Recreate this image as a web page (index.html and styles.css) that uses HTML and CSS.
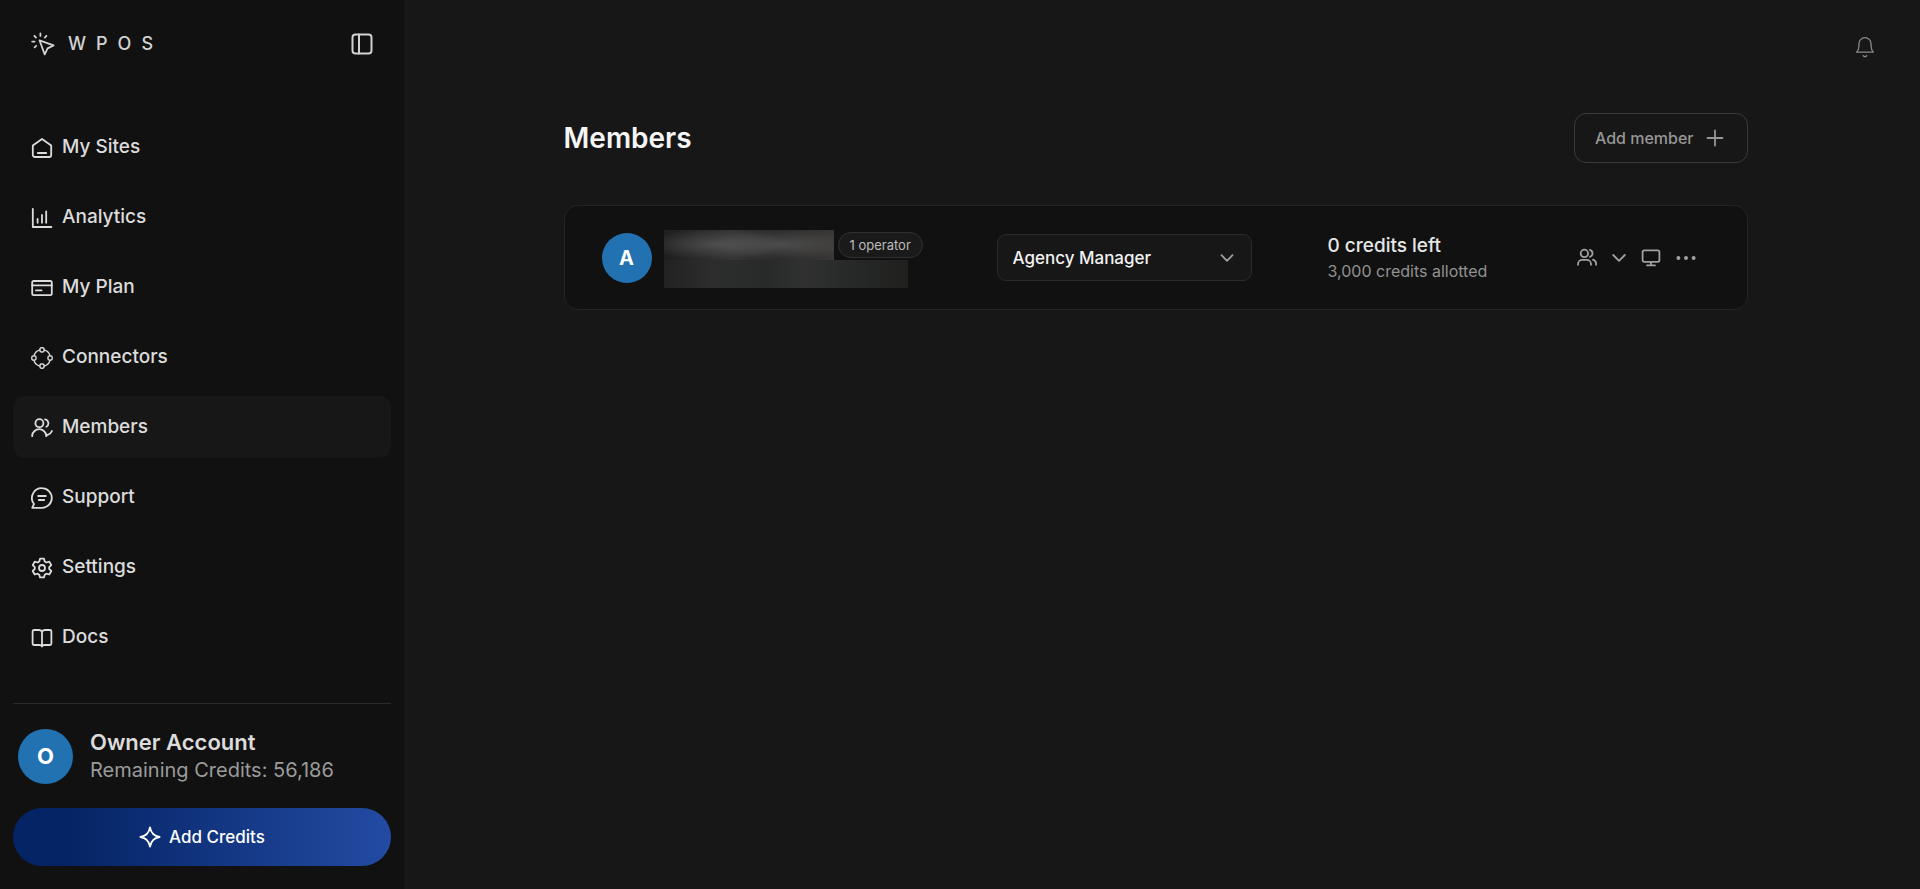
FILE: index.html
```html
<!DOCTYPE html>
<html lang="en">
<head>
<meta charset="utf-8">
<meta name="viewport" content="width=device-width, initial-scale=1">
<title>Members</title>
<link rel="stylesheet" href="styles.css">
</head>
<body>
<div class="app">
  <aside class="sidebar">
    <div class="brand-row">
      <a class="brand" href="#">
        <svg class="icon icon-logo" viewBox="0 0 24 24"><path d="M8.500 8.300 22.600 13.400 16.600 16.400 13.700 22.400Z"/><path d="M9.400 1.400v2.500M3.400 3.800 5 5.600M15.400 3.800 13.800 5.600M1.200 9.600h2.400M3.600 15.400l1.600-1.500"/></svg>
        <span class="brand-name">WPOS</span>
      </a>
      <button class="icon-button" type="button" aria-label="Toggle sidebar">
        <svg class="icon icon-panel" viewBox="0 0 22 22"><rect x="1.500" y="1.500" width="19" height="19" rx="3"/><path d="M8 1.500v19"/></svg>
      </button>
    </div>
    <nav class="nav">
      <a class="nav-item" href="#"><svg class="icon" viewBox="0 0 22 22"><path d="M1.800 8.600 11 1.900l9.200 6.700V18a2 2 0 0 1-2 2H3.800a2 2 0 0 1-2-2Z"/><path d="M6.800 16h8.400"/></svg><span>My Sites</span></a>
      <a class="nav-item" href="#"><svg class="icon" viewBox="0 0 22 22"><path d="M1.800 2v18h18.600M6.600 15.800v-4M11 15.800V8M15.200 15.800V4.500"/></svg><span>Analytics</span></a>
      <a class="nav-item" href="#"><svg class="icon" viewBox="0 0 22 22"><rect x="1.200" y="4" width="19.600" height="14.200" rx="1.600"/><path d="M1.200 8.400h19.600M5 13.400h5.600"/></svg><span>My Plan</span></a>
      <a class="nav-item" href="#"><svg class="icon icon-thin" viewBox="0 0 22 22"><rect x="8.900" y=".8" width="4.200" height="4.200" rx="1.400"/><rect x="8.900" y="17" width="4.200" height="4.200" rx="1.400"/><rect x=".8" y="8.900" width="4.200" height="4.200" rx="1.400"/><rect x="17" y="8.900" width="4.200" height="4.200" rx="1.400"/><path d="M13.100 2.900c3 .8 5.200 3 6 6M19.100 13.100c-.8 3-3 5.200-6 6M8.900 19.100c-3-.8-5.200-3-6-6M2.900 8.900c.8-3 3-5.200 6-6"/></svg><span>Connectors</span></a>
      <a class="nav-item active" href="#" aria-current="page"><svg class="icon" viewBox="0 0 22 22"><circle cx="8.400" cy="6.200" r="4"/><path d="M1.200 19.200v-.8a7 7 0 0 1 7-6.200 7 7 0 0 1 7 6.200v.8M14 2.400a4 4 0 0 1 1.400 7.400M16.200 18.200c2.300-.8 4-2.200 4.800-4.200"/></svg><span>Members</span></a>
      <a class="nav-item" href="#"><svg class="icon" viewBox="0 0 22 22"><path d="M11 1.200a9.800 9.800 0 1 1 0 19.600H1.200l1.800-3.800A9.800 9.800 0 0 1 11 1.200Z"/><path d="M7.200 9h7.600M7.800 13h5.400"/></svg><span>Support</span></a>
      <a class="nav-item" href="#"><svg class="icon" viewBox="0 0 22 22"><path d="M9 1.700h4l.7 2.800 1.700 1 2.900-.8 2 3.400-2.100 2.100v1.700l2.100 2.100-2 3.500-2.900-.8-1.700 1-.7 2.700H9l-.7-2.700-1.700-1-2.900.8-2-3.500 2.100-2.100v-1.700L1.700 8.100l2-3.400 2.900.8 1.700-1Z"/><circle cx="11" cy="11" r="3"/></svg><span>Settings</span></a>
      <a class="nav-item" href="#"><svg class="icon" viewBox="0 0 22 22"><path d="M11 4.600C10.200 3.500 9.400 3 8 3H3a1.400 1.400 0 0 0-1.400 1.400v12.200A1.400 1.400 0 0 0 3 18h5.600c1.200 0 2 .5 2.400 1.400.4-.9 1.200-1.400 2.400-1.400H19a1.400 1.400 0 0 0 1.400-1.400V4.400A1.400 1.400 0 0 0 19 3h-5c-1.400 0-2.200.5-3 1.600Zm0 0v14.800"/></svg><span>Docs</span></a>
    </nav>
    <div class="account">
      <div class="owner">
        <span class="avatar avatar-owner">O</span>
        <div class="owner-text">
          <div class="owner-name">Owner Account</div>
          <div class="owner-credits">Remaining Credits: 56,186</div>
        </div>
      </div>
      <button class="add-credits" type="button">
        <svg class="icon" viewBox="0 0 22 22"><path d="M11 1.400c1 6 3.600 8.600 9.600 9.600-6 1-8.600 3.600-9.600 9.600-1-6-3.600-8.600-9.600-9.600 6-1 8.600-3.600 9.600-9.600Z"/></svg>
        <span>Add Credits</span>
      </button>
    </div>
  </aside>

  <main class="main">
    <div class="topbar">
      <button class="icon-button" type="button" aria-label="Notifications">
        <svg class="icon icon-bell" viewBox="0 0 22 22"><path d="M2.600 16.200h16.800c-1.500-1.300-2-2.600-2.200-5L17 7.600a6 6 0 0 0-12 0l-.2 3.600c-.2 2.400-.7 3.700-2.200 5Z"/><path d="M9.200 19.800c1 1 2.600 1 3.600 0"/></svg>
      </button>
    </div>
    <div class="content">
      <header class="page-head">
        <h1>Members</h1>
        <button class="add-member" type="button"><span>Add member</span><svg class="icon icon-plus" viewBox="0 0 18 18"><path d="M9 1.500v15M1.500 9h15"/></svg></button>
      </header>
      <section class="member">
        <div class="person">
          <span class="avatar">A</span>
          <div class="identity">
            <div class="identity-top">
              <span class="redacted redacted-name"></span>
              <span class="badge">1 operator</span>
            </div>
            <span class="redacted redacted-email"></span>
          </div>
        </div>
        <div class="role">
          <select class="role-select" aria-label="Role"><option>Agency Manager</option></select>
          <svg class="icon icon-chevron role-chevron" viewBox="0 0 14 14"><path d="m1.500 4.200 5.500 5.600 5.500-5.600"/></svg>
        </div>
        <div class="credits">
          <div class="credits-left">0 credits left</div>
          <div class="credits-allotted">3,000 credits allotted</div>
        </div>
        <div class="actions">
          <button class="icon-button" type="button" aria-label="Operators"><svg class="icon icon-action" viewBox="0 0 20 20"><circle cx="7.400" cy="5.400" r="3.700"/><path d="M1 16.800V16a4.300 4.300 0 0 1 4.300-4.200h4.400A4.300 4.300 0 0 1 14 16v.8M13 1.900a3.700 3.700 0 0 1 0 7M16 11.600c2 .7 3.100 2.200 3.100 4.200v1"/></svg></button>
          <button class="icon-button" type="button" aria-label="Expand"><svg class="icon icon-chevron" viewBox="0 0 14 14"><path d="m1.200 4 5.800 5.800L12.800 4"/></svg></button>
          <button class="icon-button" type="button" aria-label="Sites"><svg class="icon icon-action" viewBox="0 0 20 20"><rect x="1.600" y="2.400" width="16.800" height="11.400" rx="1.600"/><path d="M10 13.800v3.400M6 17.400h8"/></svg></button>
          <button class="icon-button" type="button" aria-label="More"><svg class="icon icon-action icon-dots" viewBox="0 0 20 20"><circle cx="2.400" cy="10" r="2"/><circle cx="10" cy="10" r="2"/><circle cx="17.600" cy="10" r="2"/></svg></button>
        </div>
      </section>
    </div>
  </main>
</div>
</body>
</html>
```
FILE: styles.css
```css
*, *::before, *::after { box-sizing: border-box; }

body {
  margin: 0;
  background: #171717;
  color: #dcdcdc;
  font-family: Inter, "Liberation Sans", sans-serif;
}

button, select { font: inherit; color: inherit; }
button { cursor: pointer; }
a { color: inherit; text-decoration: none; }

.app { display: flex; min-height: 100vh; }

.icon {
  display: block;
  flex: none;
  width: 22px;
  height: 22px;
  fill: none;
  stroke: currentColor;
  stroke-width: 1.8;
  stroke-linecap: round;
  stroke-linejoin: round;
}
.icon-thin { stroke-width: 1.4; }
.icon-logo { width: 24px; height: 24px; }
.icon-panel { stroke-width: 2; }
.icon-bell { stroke-width: 1.3; }
.icon-plus { width: 18px; height: 18px; }
.icon-action { width: 20px; height: 20px; }
.icon-chevron { width: 14px; height: 14px; }
.icon-dots { fill: currentColor; stroke: none; }

.icon-button {
  padding: 0;
  border: 0;
  background: none;
}

.sidebar {
  display: flex;
  flex: none;
  flex-direction: column;
  width: 405px;
  padding: 32px 13px 23px;
  border-right: 1px solid #151515;
  background: #111;
}
.brand-row {
  display: flex;
  align-items: center;
  justify-content: space-between;
  height: 24px;
  padding: 0 18px;
  color: #d2d2d2;
}
.brand { display: flex; align-items: center; gap: 13px; }
.brand-name {
  font-size: 18px;
  line-height: 22px;
  font-weight: 500;
  letter-spacing: 10px;
}

.nav {
  display: flex;
  flex-direction: column;
  gap: 8px;
  margin-top: 60px;
}
.nav-item {
  display: flex;
  align-items: center;
  gap: 9px;
  height: 62px;
  padding: 0 18px 2px;
  border-radius: 12px;
  font-size: 19px;
  font-weight: 500;
}
.nav-item .icon { margin-top: 4px; }
.nav-item.active { background: #171717; }

.account {
  margin-top: auto;
  padding-top: 24px;
  border-top: 1px solid #2a2a2a;
}
.owner { display: flex; align-items: center; gap: 17px; padding: 0 5px; }
.owner-name { font-size: 22px; line-height: 28px; font-weight: 600; }
.owner-credits { font-size: 20px; line-height: 28px; color: #9b9b9b; }

.avatar {
  display: grid;
  flex: none;
  place-items: center;
  width: 50px;
  height: 50px;
  border-radius: 50%;
  background: #2271b1;
  color: #fff;
  font-size: 20px;
  font-weight: 700;
}
.avatar-owner { width: 55px; height: 55px; font-size: 22px; }

.add-credits {
  display: flex;
  align-items: center;
  justify-content: center;
  gap: 8px;
  width: 100%;
  height: 58px;
  margin-top: 24px;
  border: 0;
  border-radius: 29px;
  background: linear-gradient(90deg, #052465 15%, #234ba3);
  color: #fff;
  font-size: 17px;
  font-weight: 500;
}

.main { flex: 1; min-width: 0; padding: 36px 14px 40px 0; }
.topbar {
  display: flex;
  justify-content: flex-end;
  padding-right: 30px;
  color: #8a8a8a;
}
.content { max-width: 1184px; margin: 55px auto 0; }
.page-head {
  display: flex;
  align-items: center;
  justify-content: space-between;
}
h1 {
  margin: 0;
  color: #f5f5f5;
  font-size: 28px;
  line-height: 40px;
  font-weight: 600;
}
.add-member {
  display: flex;
  align-items: center;
  gap: 12px;
  height: 50px;
  padding: 0 23px 0 20px;
  border: 1px solid #3a3a3a;
  border-radius: 12px;
  background: none;
  color: #969696;
  font-size: 16px;
  font-weight: 500;
}

.member {
  display: grid;
  grid-template-columns: 395fr 331fr 249fr 133fr;
  align-items: center;
  min-height: 105px;
  margin-top: 42px;
  padding: 20px 37px;
  border: 1px solid #242424;
  border-radius: 14px;
  background: #111;
}
.person { display: flex; align-items: center; gap: 12px; }
.identity { padding-top: 2px; }
.identity-top { display: flex; align-items: center; gap: 4px; }
.redacted { display: block; }
.redacted-name {
  width: 170px;
  height: 30px;
  background:
    radial-gradient(ellipse 44% 50% at 30% 48%, #6668 0, #6660 100%),
    radial-gradient(ellipse 44% 50% at 70% 48%, #6668 0, #6660 100%),
    linear-gradient(90deg, #1e1e1e, #343434 40%, #2a2a2a 65%, #3a3836);
}
.redacted-email {
  width: 244px;
  height: 28px;
  background:
    linear-gradient(90deg, #222, #2d2d2d 20%, #282a2a 42%, #303030 58%, #262928 78%, #20201e);
}
.badge {
  padding: 0 11px;
  border: 1px solid #303030;
  border-radius: 13px;
  background: #1a1a1a;
  color: #bdbdbd;
  font-size: 13px;
  line-height: 24px;
  white-space: nowrap;
}

.role { position: relative; width: 255px; max-width: 90%; }
.role-select {
  width: 100%;
  height: 47px;
  padding: 0 40px 0 15px;
  border: 1px solid #2b2b2b;
  border-radius: 9px;
  background: #171717;
  color: #f2f2f2;
  appearance: none;
  font-size: 17px;
  font-weight: 500;
}
.role-chevron {
  position: absolute;
  top: 17px;
  right: 18px;
  color: #a0a0a0;
  pointer-events: none;
}

.credits-left {
  color: #e6e6e6;
  font-size: 19px;
  line-height: 26px;
  font-weight: 500;
}
.credits-allotted { color: #929292; font-size: 16px; line-height: 24px; }
.actions {
  display: flex;
  align-items: center;
  gap: 15px;
  color: #a0a0a0;
}
```
